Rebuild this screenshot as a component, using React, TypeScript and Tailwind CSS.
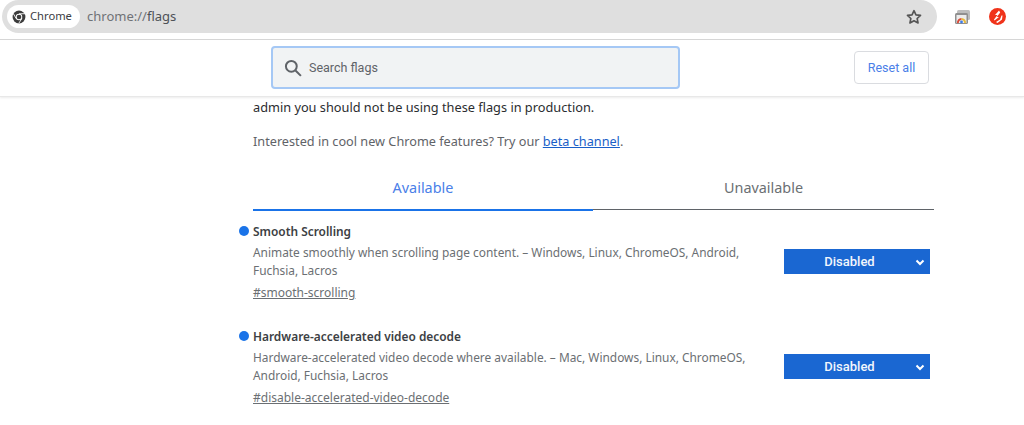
import React from "react";

const segoe = "font-['Noto_Sans','Open_Sans',sans-serif]";

function ChromeGlyph({ size = 14 }: { size?: number }) {
  return (
    <svg width={size} height={size} viewBox="0 0 24 24" fill="none">
      <circle cx="12" cy="12" r="11" fill="#3c3c3c" />
      <circle cx="12" cy="12" r="5.6" fill="#fff" />
      <circle cx="12" cy="12" r="4" fill="#3c3c3c" />
      <path d="M12 6.4H22M7.2 14.8L2.5 6.5M16.8 14.8L11.5 23" stroke="#fff" strokeWidth="1.5" />
    </svg>
  );
}

function Flag({ title, lines, link }: { title: string; lines: string[]; link: string }) {
  return (
    <div className="relative flex h-[105px] w-[677px] items-start justify-between">
      <span className="absolute left-[-14px] top-[4px] h-[10px] w-[10px] rounded-full bg-[#1a73e8]" />
      <div className={`${segoe} text-[11.9px] text-[#6b6f73]`}>
        <div className="h-[21px] text-[11.9px] font-semibold leading-[18px] text-[#3c4043]">{title}</div>
        {lines.map((l) => (
          <div key={l} className="h-[18px] leading-[18px] whitespace-nowrap">{l}</div>
        ))}
        <div className="mt-[5px] text-[12px] leading-[18px] underline">{link}</div>
      </div>
      <div className="mt-[27px] flex h-[25px] w-[146px] items-center bg-[#1a67d2] font-['Roboto',sans-serif] text-[13px] font-medium text-[#f2f6fc]">
        <span className="flex-1 pl-[3px] text-center">Disabled</span>
        <svg width="16" height="16" viewBox="0 0 16 16" className="mr-[2px]" fill="none" stroke="#fff" strokeWidth="2">
          <path d="M4.5 6.5 8 10l3.5-3.5" />
        </svg>
      </div>
    </div>
  );
}

export default function App() {
  return (
    <div className="h-[425px] w-[1024px] overflow-hidden bg-white">
      <div className="flex h-[40px] items-start border-b border-[#d7d7d7] pl-[2px]">
        <div className="flex h-[33px] w-[935px] items-center rounded-r-[17px] rounded-l-[17px] bg-[#dfdfdf] pl-[5px]">
          <div className={`${segoe} flex h-[23px] w-[73px] items-center gap-[4px] rounded-full bg-white pl-[5px] text-[11.2px] text-[#3c4043]`}>
            <ChromeGlyph />
            <span>Chrome</span>
          </div>
          <div className={`${segoe} ml-[7px] flex-1 text-[13px] text-[#6f7276]`}>
            chrome://<span className="text-[#4d5156]">flags</span>
          </div>
          <svg width="18" height="18" viewBox="0 0 24 24" className="mr-[14px]" fill="none" stroke="#555" strokeWidth="2.2" strokeLinejoin="round">
            <path d="M12 3.5l2.6 5.6 6.1.7-4.5 4.2 1.2 6L12 17l-5.4 3 1.2-6-4.5-4.2 6.1-.7z" />
          </svg>
        </div>
        <div className="ml-[17px] mt-[8px] flex items-center gap-[18px]">
          <svg width="17" height="16" viewBox="0 0 17 16">
            <rect x="3" y="1" width="13" height="10" rx="1.5" fill="#bdbdbd" />
            <rect x="1" y="4" width="13" height="11" rx="1.5" fill="#8f8f8f" />
            <rect x="2.5" y="6" width="10" height="8" fill="#ececec" />
            <path d="M4 14a3.5 3.5 0 0 1 3.5-4" stroke="#d94a38" strokeWidth="2" fill="none" />
            <path d="M7.5 10a3.5 3.5 0 0 1 3.5 4" stroke="#e9b93a" strokeWidth="2" fill="none" />
            <circle cx="7.5" cy="13" r="1.4" fill="#3f7de8" />
          </svg>
          <svg width="17" height="17" viewBox="0 0 17 17">
            <circle cx="8.5" cy="8.5" r="8.5" fill="#f0331a" />
            <path d="M10 2.5 6 7h2.5L5 11.5l.5 1L10 9H7.8l3.4-4.5z M12.5 7.5l-1.5 4-4 2.5 1.5 1 4.5-3.5.5-4z" fill="#fff" />
          </svg>
        </div>
      </div>

      <div className="relative z-10 flex h-[57px] border-b border-[#e8e8e8] bg-white shadow-[0_1px_2px_rgba(0,0,0,0.08)]">
        <div className="ml-[271px] mt-[6px] flex h-[43px] w-[409px] items-center rounded-[4px] border-2 border-[#a5c8f5] bg-[#f1f3f4] pl-[10px]">
          <svg width="20" height="20" viewBox="0 0 24 24" fill="none" stroke="#5f6368" strokeWidth="2.4">
            <circle cx="10" cy="10" r="6.5" />
            <path d="M15 15l6.5 6.5" />
          </svg>
          <span className="ml-[6px] mt-[2px] font-['Roboto',sans-serif] text-[12.5px] text-[#5f6368]">Search flags</span>
        </div>
        <div className="ml-[174px] mt-[11px] flex h-[33px] w-[75px] items-center justify-center rounded-[4px] border border-[#dadce0] pt-[1px] font-['Roboto',sans-serif] text-[12.5px] text-[#4a80e8]">
          Reset all
        </div>
      </div>

      <div className="pl-[253px]">
        <div className={`${segoe} h-[20px] text-[12.75px] leading-[20px] text-[#2b2d30]`}>
          admin you should not be using these flags in production.
        </div>
        <div className={`${segoe} mt-[14px] h-[20px] text-[12.7px] leading-[20px] text-[#5f6368]`}>
          Interested in cool new Chrome features? Try our <span className="text-[#1a5fc8] underline">beta channel</span>.
        </div>

        <div className={`${segoe} mt-[17px] flex h-[43px] w-[681px] text-[14.4px]`}>
          <div className="flex w-[340px] items-center justify-center border-b-2 border-[#1a73e8] pb-[2px] text-[#4a80e8]">Available</div>
          <div className="flex h-[42px] flex-1 items-center justify-center border-b border-[#5f6368] pb-[2px] text-[#6b6f73]">Unavailable</div>
        </div>

        <div className="mt-[11px]">
          <Flag
            title="Smooth Scrolling"
            lines={["Animate smoothly when scrolling page content. – Windows, Linux, ChromeOS, Android,", "Fuchsia, Lacros"]}
            link="#smooth-scrolling"
          />
          <Flag
            title="Hardware-accelerated video decode"
            lines={["Hardware-accelerated video decode where available. – Mac, Windows, Linux, ChromeOS,", "Android, Fuchsia, Lacros"]}
            link="#disable-accelerated-video-decode"
          />
        </div>
      </div>
    </div>
  );
}
